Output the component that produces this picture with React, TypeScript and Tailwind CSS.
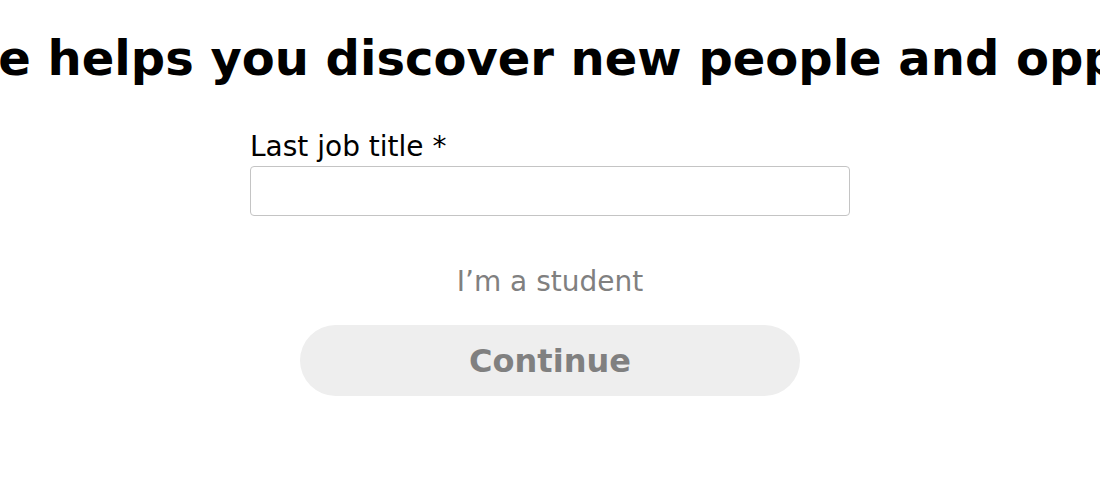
export default function App() {
  return (
    <div className="min-h-[495px] w-full overflow-hidden bg-white font-['DejaVu_Sans',sans-serif]">
      <div className="flex justify-center pt-[26px]">
        <h1 className="whitespace-nowrap text-[48px] font-bold leading-[64px] text-black">
          Your profile helps you discover new people and opportunities
        </h1>
      </div>

      <form className="mx-auto mt-[40px] flex w-[600px] flex-col">
        <label className="text-[28px] leading-[34px] text-black">Last job title *</label>
        <input
          type="text"
          className="mt-[2px] h-[50px] w-full rounded-[4px] border border-[#c4c4c4] bg-white px-3 outline-none"
        />

        <button type="button" className="mt-[48px] self-center text-[28px] leading-[36px] text-[#808080]">
          I’m a student
        </button>

        <button
          type="button"
          className="mt-[25px] h-[71px] w-[500px] self-center rounded-full bg-[#eeeeee] text-[32px] font-bold text-[#808080]"
        >
          Continue
        </button>
      </form>
    </div>
  );
}
